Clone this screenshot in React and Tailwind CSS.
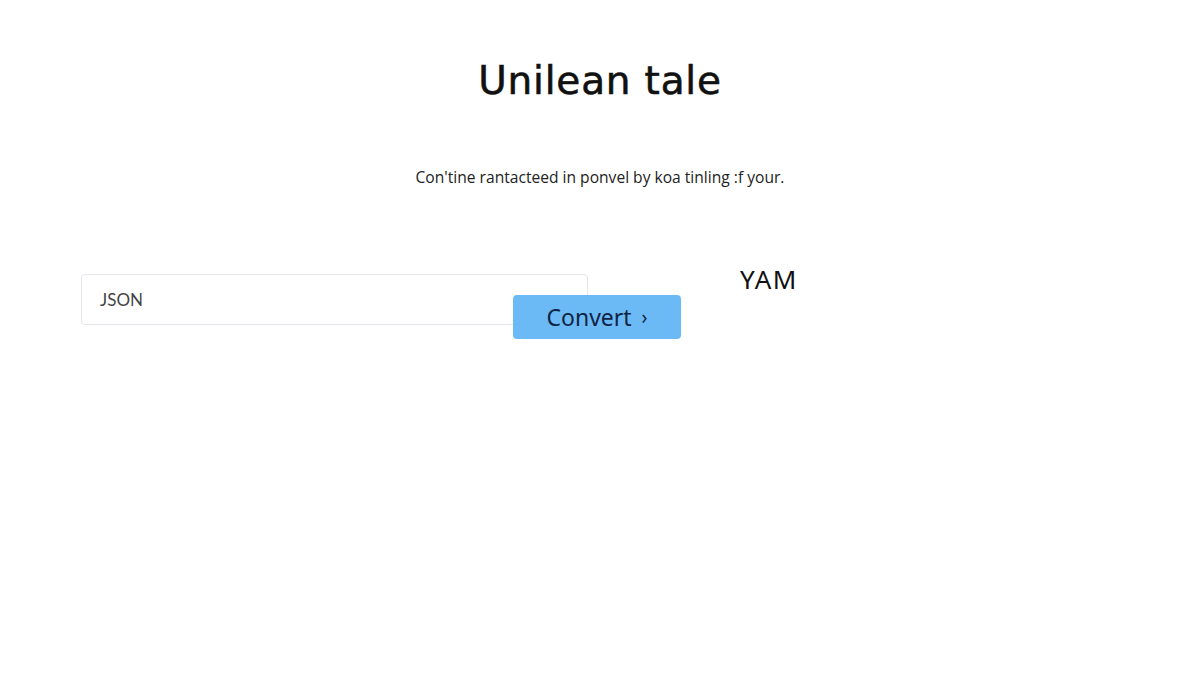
export default function App() {
  return (
    <div className="w-[1200px] h-[675px] bg-white overflow-hidden flex flex-col font-['Open_Sans',sans-serif]">
      <div className="flex flex-col items-center pt-[56px]">
        <h1 className="text-[39px] leading-[50px] text-[#111] tracking-[0.8px] font-['DejaVu_Sans',sans-serif] [-webkit-text-stroke:0.6px_#111]">Unilean tale</h1>
        <p className="mt-[60px] text-[15.6px] leading-[22px] text-[#222]">Con'tine rantacteed in ponvel by koa tinling :f your.</p>
      </div>
      <div className="flex items-start pl-[81px] mt-[86px]">
        <div className="w-[507px] h-[51px] border border-[#e3e6ea] rounded-[4px] bg-white flex items-center pl-[18px] text-[17px] text-[#444] shrink-0 font-['Lato',sans-serif]">JSON</div>
        <button className="ml-[-75px] mt-[21px] w-[168px] h-[44px] rounded-[4px] bg-[#6cbaf5] text-[#0f2444] text-[23px] flex items-center justify-center gap-[10px] shrink-0 font-['Noto_Sans',sans-serif]">
          Convert <span className="text-[19px]">›</span>
        </button>
        <div className="ml-[59px] mt-[-14px] text-[26px] text-[#111] tracking-[1.5px] font-['Noto_Sans',sans-serif]">YAM</div>
      </div>
    </div>
  );
}
